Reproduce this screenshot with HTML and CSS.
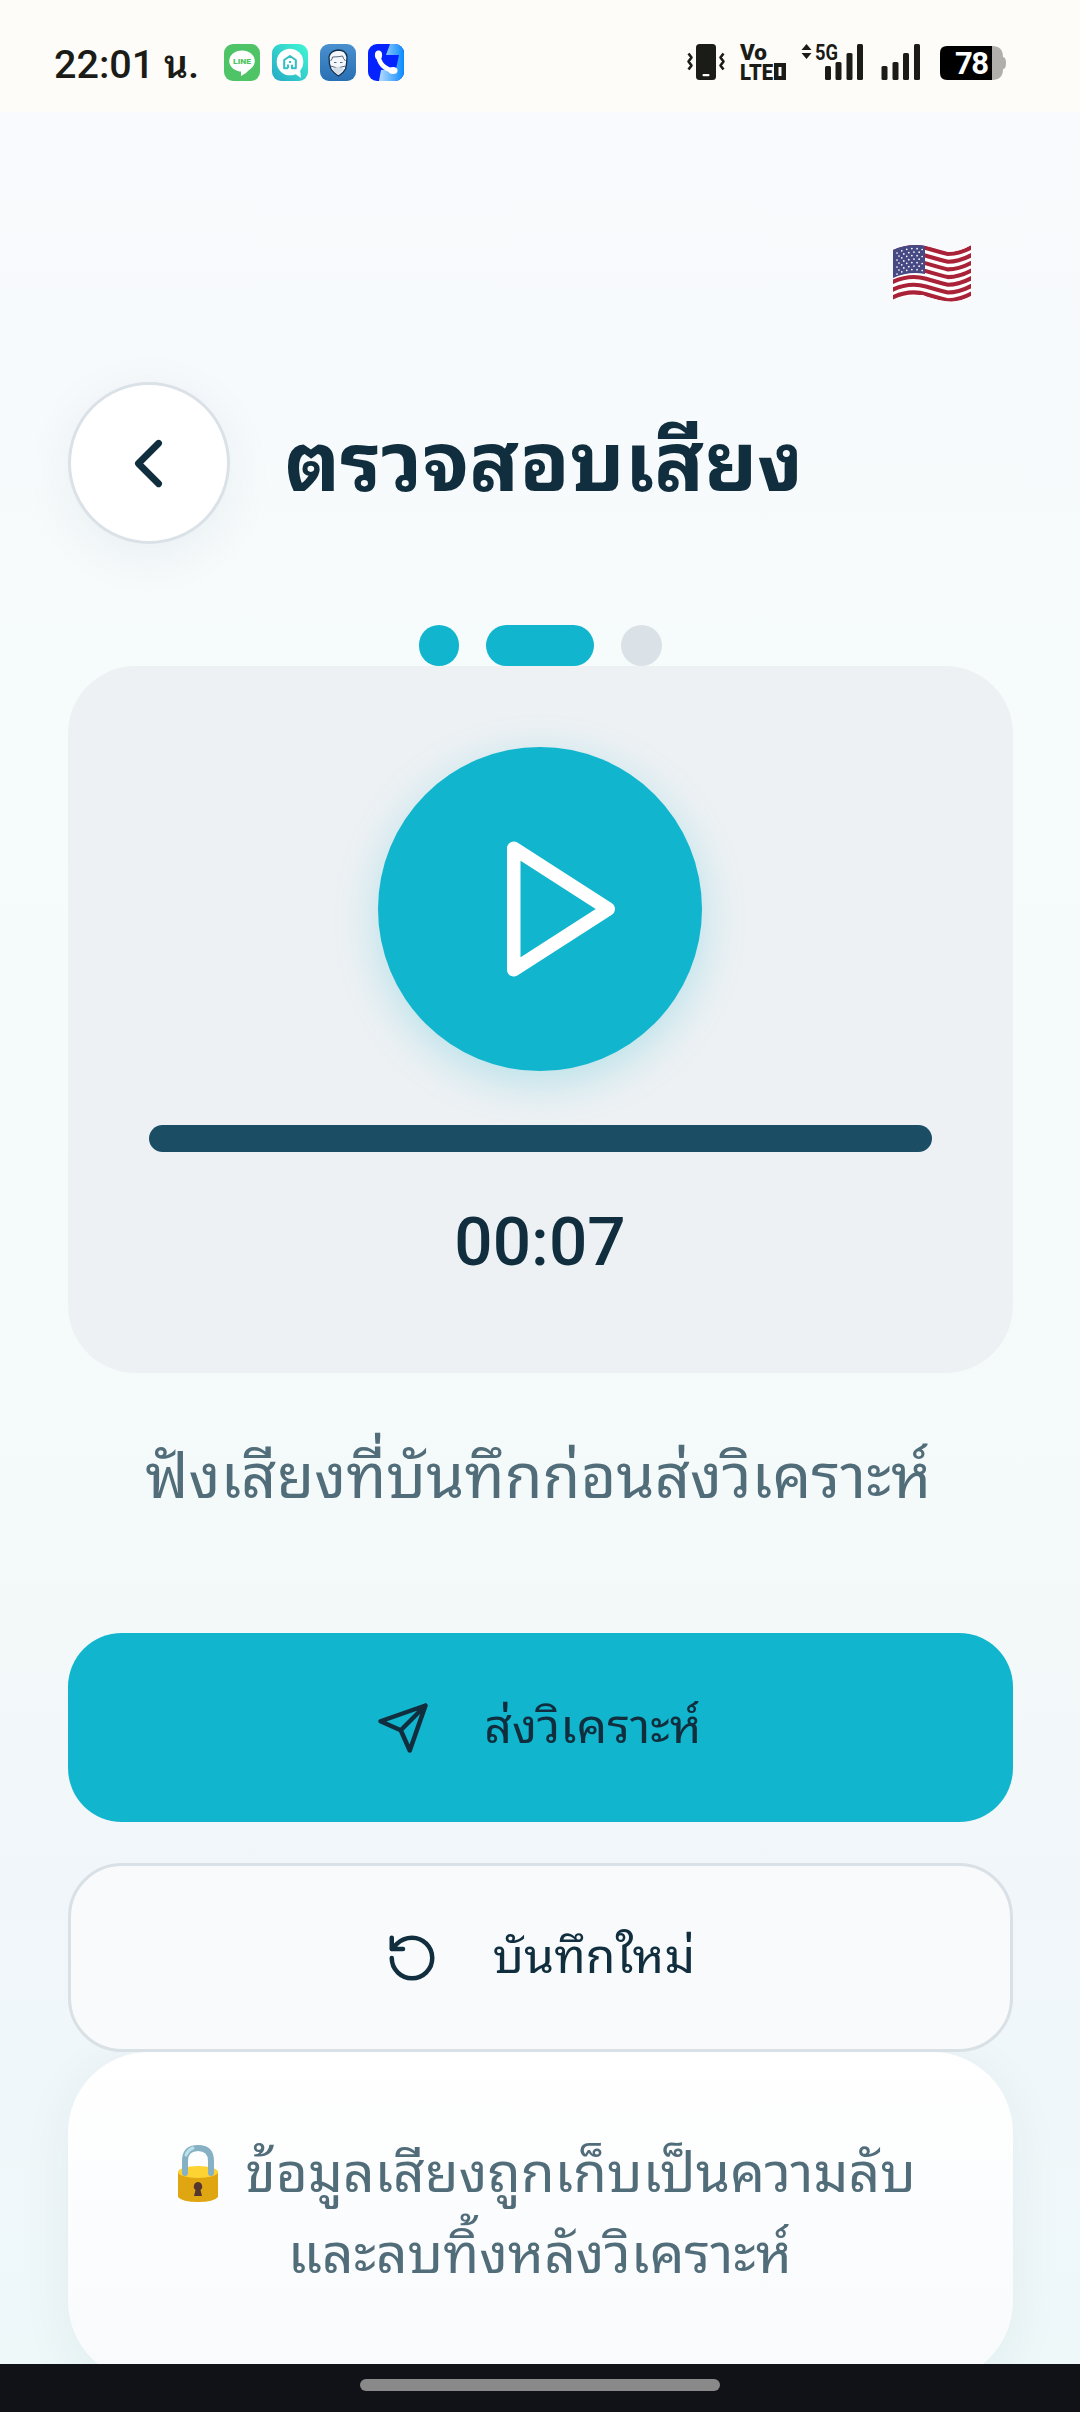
FILE: index.html
```html
<!DOCTYPE html>
<html lang="th">
<head>
<meta charset="utf-8">
<title>ตรวจสอบเสียง</title>
<link rel="stylesheet" href="styles.css">
</head>
<body>
<header class="status">
  <span class="clock">22:01 <b>น.</b></span>
  <div class="apps">
    <svg class="app" viewBox="0 0 36 37"><rect width="36" height="37" rx="9" fill="#4fc466"/><ellipse cx="18" cy="17" rx="12.8" ry="10.6" fill="#fff"/><path d="M17 26v6q6-3 9-7z" fill="#fff"/><text x="18" y="20.4" class="line-word" textLength="18" lengthAdjust="spacingAndGlyphs">LINE</text></svg>
    <svg class="app" viewBox="0 0 36 37"><defs><linearGradient id="teal" x1="0" y1="1" x2="1" y2="0"><stop offset="0" stop-color="#27a9c5"/><stop offset="1" stop-color="#40f8d4"/></linearGradient></defs><rect width="36" height="37" rx="9" fill="url(#teal)"/><circle cx="18" cy="18" r="13.3" fill="#fff"/><path d="M22 29l6-4 1 9z" fill="#fff"/><path d="M16 24.200H12.200V16L18 12l5.800 4v8.200H20v-3.500M18 17v2M16 20.500v3.700" fill="none" stroke="#37bfc4" stroke-width="2.100"/></svg>
    <svg class="app" viewBox="0 0 36 37"><defs><linearGradient id="blue" x2="0" y2="1"><stop stop-color="#4a90cf"/><stop offset="1" stop-color="#2870b4"/></linearGradient></defs><rect width="36" height="37" rx="9" fill="url(#blue)"/><path d="M9.500 20L9 13Q10 7 18 6q8 0 9 7l-.5 7-1 5q-2 4-7 7-5-3-7.500-7z" fill="#f4f7fb" stroke="#13304f" stroke-width="1.300"/><path d="M10.500 17q2-2 2-4 6 0 10-1 1 3 3 5M10.500 22l7 2 8-2M14 18.500h2.500M20 18.500h2.500" fill="none" stroke="#54687e" stroke-width="1"/><path d="M12 25l6-2.500 6 2.500-6 6z" fill="#d5dde6"/></svg>
    <svg class="app" viewBox="0 0 36 37"><defs><linearGradient id="sky"><stop stop-color="#b9dcff"/><stop offset="1" stop-color="#078bff"/></linearGradient><clipPath id="tile"><rect width="36" height="37" rx="9"/></clipPath></defs><g clip-path="url(#tile)"><path d="M0 0h36v37H0z" fill="#0423ff"/><path d="M22 0h14v37H11l2-11 15-1 3-14H18z" fill="url(#sky)"/></g><path d="M10 10Q11 24 26 27" fill="none" stroke="#fff" stroke-width="4.500"/><ellipse cx="10.500" cy="11" rx="3.600" ry="4.500" fill="#fff"/><ellipse cx="25" cy="26.500" rx="4.500" ry="3.500" fill="#fff"/></svg>
  </div>
  <svg class="system" viewBox="0 0 330 40">
    <g fill="#1b1c18">
      <rect x="9" y="2" width="20" height="36" rx="3.500"/>
      <rect x="15.500" y="32" width="7" height="2.200" rx="1" fill="#fdfcf8"/>
      <path d="M1.500 10.500l3 4-3 4 3 4-3 4M36.500 10.500l-3 4 3 4-3 4 3 4" transform="translate(0 1)" fill="none" stroke="#1b1c18" stroke-width="2.600"/>
      <text class="vo" x="53" y="17.500" textLength="27" lengthAdjust="spacingAndGlyphs">Vo</text>
      <text class="lte" x="53" y="37.500" textLength="33" lengthAdjust="spacingAndGlyphs">LTE</text>
      <path d="M87 21h12v17H87zm4.500 4v9h3v-9z" fill-rule="evenodd"/>
      <path d="M114.500 8l5-6 5 6zM114.500 11h10l-5 6z"/>
      <text class="fiveg" x="128" y="17.500" textLength="23" lengthAdjust="spacingAndGlyphs">5G</text>
      <rect x="138" y="24" width="6" height="14" rx="1.500"/><rect x="148.500" y="20" width="6" height="18" rx="1.500"/><rect x="159.500" y="11" width="6" height="27" rx="1.500"/><rect x="170" y="2" width="6" height="36" rx="1.500"/>
      <rect x="194.500" y="24" width="6" height="14" rx="1.500"/><rect x="205.500" y="20" width="6" height="18" rx="1.500"/><rect x="216" y="11" width="6" height="27" rx="1.500"/><rect x="227" y="2" width="6" height="36" rx="1.500"/>
    </g>
    <path d="M305 4q11 0 11 11 3 0 3 6t-3 6q0 11-11 11z" fill="#b0afac"/>
    <path d="M260 4h45v34h-45q-7 0-7-7V11q0-7 7-7z" fill="#000"/>
    <text class="charge" x="268" y="32" textLength="34">78</text>
  </svg>
</header>
<main class="screen">
  <div class="language">
    <svg class="flag" viewBox="0 0 79 59">
      <defs><clipPath id="wave"><path d="M0 6Q16-1 33 2T55 8Q67 8 78 1V52Q66 59 52 57T30 51Q15 50 0 57z"/></clipPath></defs>
      <g clip-path="url(#wave)">
        <path d="M0 0h79v59H0z" fill="#fff"/>
        <g fill="none" stroke="#a92238" stroke-width="4.100"><path id="s" d="M-2 8Q16-1 33 4T55 10Q67 10 81 2"/><use href="#s" y="7.700"/><use href="#s" y="15.400"/><use href="#s" y="23.100"/><use href="#s" y="30.800"/><use href="#s" y="38.500"/><use href="#s" y="46.200"/></g>
        <path d="M0 0h32v30Q16 27 0 34z" fill="#464983"/>
        <g fill="none" stroke="#fff" stroke-width="1.700" stroke-linecap="round" stroke-dasharray="0 5.200"><path d="M4 9Q17 2 31 6"/><path d="M6 12Q18 6 31 9"/><path d="M4 16Q17 9 31 13"/><path d="M6 19Q18 13 31 16"/><path d="M4 23Q17 16 31 20"/><path d="M6 26Q18 20 31 23"/><path d="M4 30Q17 23 31 27"/></g>
      </g>
    </svg>
  </div>
  <div class="heading">
    <button class="back" aria-label="ย้อนกลับ"><svg viewBox="0 0 24 24"><path d="m15 18-6-6 6-6"/></svg></button>
    <h1 class="title">ตรวจสอบเสียง</h1>
  </div>
  <div class="steps"><i class="step done"></i><i class="step current"></i><i class="step"></i></div>
  <section class="player">
    <button class="play" aria-label="เล่น"><svg viewBox="0 0 24 24"><path d="M5 3l14 9-14 9z"/></svg></button>
    <div class="progress"></div>
    <div class="time">00:07</div>
  </section>
  <p class="hint"><span>ฟังเสียงที่บันทึกก่อนส่งวิเคราะห์</span></p>
  <div class="actions">
    <button class="action send"><svg viewBox="0 0 24 24"><path d="M22 2 11 13M22 2l-7 20-4-9-9-4z"/></svg><span>ส่งวิเคราะห์</span></button>
    <button class="action redo"><svg viewBox="0 0 24 24"><path d="M3 12a9 9 0 1 0 9-9 9.750 9.750 0 0 0-6.740 2.740L3 8M3 3v5h5"/></svg><span>บันทึกใหม่</span></button>
  </div>
  <section class="privacy">
    <p class="first"><svg class="lock" viewBox="0 0 42 58"><path d="M8 27V16Q8 3 21 3t13 13v11" fill="none" stroke="#86b0c3" stroke-width="6"/><path d="M1 27v25q4 5 20 5t20-5V27z" fill="#e0a611"/><ellipse cx="21" cy="27" rx="20" ry="6" fill="#fdd333"/><path d="M8 20v8M34 20v8" stroke="#86b0c3" stroke-width="6" stroke-linecap="round"/><path d="M9 10q2-5 7-7" fill="none" stroke="#b9e2ea" stroke-width="3" stroke-linecap="round"/><path d="M21 37a4.500 4.500 0 0 1 2.500 8l1.500 6h-8l1.500-6a4.500 4.500 0 0 1 2.500-8z" fill="#543530"/></svg><span>ข้อมูลเสียงถูกเก็บเป็นความลับ</span></p>
    <p class="second"><span>และลบทิ้งหลังวิเคราะห์</span></p>
  </section>
</main>
<footer class="gesture"><i></i></footer>
</body>
</html>
```
FILE: styles.css
```css
* { box-sizing: border-box; }
body { margin: 0; width: 1080px; height: 2412px; overflow: hidden; display: flex; flex-direction: column; font-family: Roboto, "Noto Sans Thai Looped", "Noto Looped Thai", "Noto Sans Thai", "Noto Sans", sans-serif; color: #102e3d; background: #f8fafc; }
button { padding: 0; border: 0; font: inherit; color: inherit; }
p, h1 { margin: 0; white-space: nowrap; }
.status { height: 112px; flex: none; background: #fdfcf8; display: flex; align-items: flex-start; padding: 43px 72px 0 54px; }
.clock { width: 170px; margin-top: -1px; font-size: 39.5px; font-weight: 500; line-height: 46px; color: #1b1c18; white-space: nowrap; }
.clock b { font-weight: 600; font-size: 37.5px; }
.apps { display: flex; gap: 12px; padding-top: 1px; }
.app { width: 36px; height: 37px; display: block; }
.line-word { font: 900 7.5px Roboto, sans-serif; fill: #4fc466; text-anchor: middle; }
.system { width: 330px; height: 40px; margin-top: -1px; margin-left: auto; margin-right: -9px; overflow: visible; }
.vo, .lte { font: 900 22px Roboto, sans-serif; }
.fiveg { font: 700 22px Roboto, sans-serif; }
.charge { font: 700 31px Roboto, sans-serif; fill: #fff; }
.screen { height: 2252px; flex: none; overflow: hidden; padding: 0 67.5px; background: linear-gradient(#f9fafd 0, #f7fafc 10%, #f6fbfc 24%, #f5fafb 50%, #f4faf9 64%, #f1f6fa 78%, #eef8f9 100%); }
.language { height: 270px; padding: 132px 41px 0; display: flex; justify-content: flex-end; }
.flag { width: 79px; height: 59px; }
.heading { height: 162px; display: flex; align-items: center; gap: 55px; }
.back { width: 162px; height: 162px; flex: none; border: 3px solid #dae1e7; border-radius: 50%; background: #fff; display: grid; place-items: center; box-shadow: 0 11px 54px rgba(16, 46, 61, .06); }
.back svg { width: 81px; height: 81px; }
svg path { stroke-linejoin: round; }
.back path, .play path, .action path { fill: none; stroke: currentColor; stroke-width: 2; stroke-linecap: round; stroke-linejoin: round; }
.title { font-size: 82.2px; font-weight: 700; line-height: 110px; }
.steps { height: 122px; padding-top: 81px; display: flex; justify-content: center; gap: 27px; }
.step { width: 40.5px; height: 41px; border-radius: 21px; background: #dae1e7; }
.step.done, .step.current { background: #11b5cd; }
.step.current { width: 108px; }
.player { height: 707px; border-radius: 67.5px; background: #edf1f4; padding: 81px; display: flex; flex-direction: column; align-items: center; }
.play { width: 324px; height: 324px; flex: none; border-radius: 50%; background: #11b5cd; color: #fff; display: grid; place-items: center; padding-left: 41px; box-shadow: 0 11px 43px rgba(17, 181, 205, .25); }
.play svg { width: 162px; height: 162px; }
.progress { width: 783px; height: 27px; margin-top: 54px; flex: none; border-radius: 14px; background: #1b4d65; }
.time { font-size: 67.5px; font-weight: 500; line-height: 80px; margin-top: 50px; }
.hint { height: 260px; padding: 59px 3px 0 0; text-align: center; font-size: 61.5px; line-height: 90px; color: #526d7a; }
.actions { display: flex; flex-direction: column; gap: 41px; }
.action { height: 189px; border-radius: 54px; display: flex; align-items: center; justify-content: center; gap: 54px; font-size: 48.3px; }
.action svg { width: 54px; height: 54px; }
.action span { padding-bottom: 12px; }
.send { background: #11b5cd; padding-right: 2px; }
.redo { background: #f9fafc; border: 3px solid #d9e0e6; }
.privacy { height: 330px; border-radius: 81px; background: linear-gradient(#fff, #f8fafc); box-shadow: 0 11px 54px rgba(16, 46, 61, .06); padding-top: 81px; font-size: 55.1px; line-height: 81px; color: #526d7a; }
.privacy p { height: 81px; display: flex; align-items: center; justify-content: center; }
.privacy .first { padding-left: 13px; }
.lock { width: 42px; height: 58px; margin-right: 26px; }
.gesture { height: 48px; flex: none; background: #111217; display: flex; justify-content: center; align-items: flex-start; padding-top: 15px; }
.gesture i { width: 360px; height: 12px; border-radius: 6px; background: #89898a; }
```
